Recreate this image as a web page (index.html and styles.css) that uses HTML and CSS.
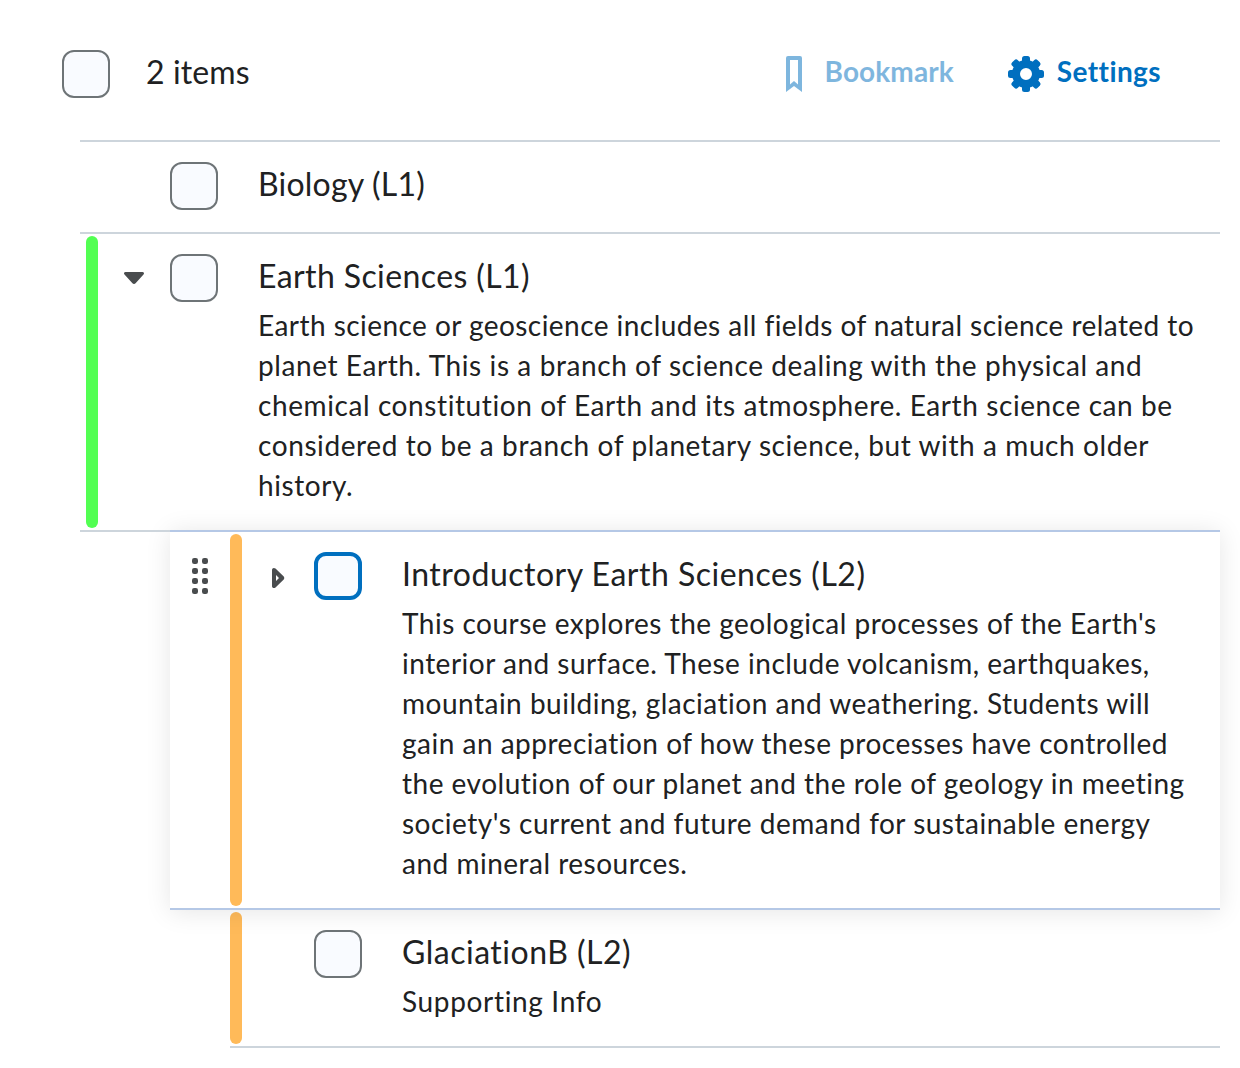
FILE: index.html
```html
<!DOCTYPE html>
<html lang="en">
<head>
<meta charset="utf-8">
<title>Course list</title>
<link rel="stylesheet" href="styles.css">
</head>
<body>
<header class="controls">
  <span class="checkbox"></span>
  <span class="count">2 items</span>
  <div class="actions">
    <div class="action disabled">
      <svg class="icon" viewBox="0 0 36 36"><path d="M10 2a2 2 0 0 1 2-2h12a2 2 0 0 1 2 2v34l-8-6-8 6zM14 4v24.500l4-3.500 4 3.500V4z" fill-rule="evenodd"/></svg>
      <span>Bookmark</span>
    </div>
    <div class="action settings">
      <svg class="icon" viewBox="0 0 36 36">
        <circle cx="18" cy="18" r="10" fill="none" stroke="currentColor" stroke-width="8"/>
        <g id="teeth"><rect x="14" y="0" width="8" height="9" rx="2.500"/><rect x="14" y="27" width="8" height="9" rx="2.500"/><rect x="0" y="14" width="9" height="8" rx="2.500"/><rect x="27" y="14" width="9" height="8" rx="2.500"/></g>
        <use href="#teeth" transform="rotate(45 18 18)"/>
      </svg>
      <span>Settings</span>
    </div>
  </div>
</header>
<main class="list">
  <section class="item">
    <div class="outer"><span class="bar"></span><span class="toggle"></span><span class="checkbox"></span></div>
    <div class="content"><h2 class="biology">Biology (L1)</h2></div>
  </section>
  <section class="item">
    <div class="outer"><span class="bar green"></span><span class="toggle"><svg width="36" height="36" viewBox="0 0 36 36"><path d="M9.500 12h17c1.500 0 2 1.500 1 2.600l-7.700 8.400c-1 1.300-2.600 1.300-3.600 0l-7.700-8.400C7.500 13.500 8 12 9.500 12z"/></svg></span><span class="checkbox"></span></div>
    <div class="content"><h2>Earth Sciences (L1)</h2>
    <p class="earth"><span class="snug">Earth science or geoscience includes all fields of natural science related to</span> planet Earth. This is a branch of science dealing with the physical and chemical constitution of Earth and its atmosphere. Earth science can be considered to be a branch of planetary science, but with a much older history.</p></div>
  </section>
  <section class="item nested hovered">
    <div class="handle"><svg width="16" height="36" viewBox="0 0 16 36"><g id="dots"><rect width="6" height="6" rx="2.200"/><rect y="10" width="6" height="6" rx="2.200"/><rect y="20" width="6" height="6" rx="2.200"/><rect y="30" width="6" height="6" rx="2.200"/></g><use href="#dots" x="10"/></svg></div>
    <div class="outer"><span class="bar orange"></span><span class="toggle collapsed"><svg width="36" height="36" viewBox="0 0 36 36"><path fill-rule="evenodd" d="M12 10c0-2 2-2.800 3.500-1.400l8 7.600c1 1 1 2.600 0 3.600l-8 7.600c-1.500 1.400-3.500.6-3.500-1.400zM16 15v6l3-3z"/></svg></span><span class="checkbox focus"></span></div>
    <div class="content"><h2 class="intro">Introductory Earth Sciences (L2)</h2>
    <p class="course">This course explores the geological processes of the Earth's interior and surface. These include volcanism, earthquakes, mountain building, glaciation and weathering. Students will gain an appreciation of how these processes have controlled the evolution of our planet and the role of geology in meeting society's current and future demand for sustainable energy and mineral resources.</p></div>
  </section>
  <section class="item nested last">
    <div class="outer"><span class="bar orange"></span><span class="toggle"></span><span class="checkbox"></span></div>
    <div class="content"><h2 class="intro">GlaciationB (L2)</h2><p class="supporting">Supporting Info</p></div>
  </section>
</main>
</body>
</html>
```
FILE: styles.css
```css
* { box-sizing: border-box; }
body {
  margin: 0;
  background: #fff;
  color: #202122;
  font-family: Lato, sans-serif;
  letter-spacing: 0.4px;
}
.controls {
  display: flex;
  align-items: flex-start;
  height: 140px;
  padding: 50px 79px 0 62px;
}
.checkbox {
  flex: none;
  width: 48px;
  height: 48px;
  border: 2px solid #6e7477;
  border-radius: 12px;
  background: #f9fbff;
}
.checkbox.focus { border: 4px solid #006fbf; }
.count {
  margin-left: 36px;
  font-size: 32px;
  line-height: 44px;
  letter-spacing: 0.1px;
}
.actions {
  display: flex;
  gap: 54px;
  margin-left: auto;
}
.action {
  display: flex;
  align-items: center;
  gap: 13px;
  height: 48px;
  color: #006fbf;
  font-size: 28px;
  font-weight: 700;
  line-height: 40px;
}
.action span { margin-top: -6px; }
.action.disabled {
  opacity: 0.5;
  letter-spacing: 0.1px;
}
.icon {
  width: 36px;
  height: 36px;
  fill: currentColor;
}
.list { margin: 0 20px 0 80px; }
.item {
  display: flex;
  border-top: 2px solid #cdd5dc;
}
.outer {
  display: flex;
  flex: none;
  padding-left: 6px;
}
.outer .checkbox { margin: 20px 40px 0 18px; }
.bar {
  width: 12px;
  margin: 2px 0;
  border-radius: 6px;
}
.green { background: #52ff52; }
.orange { background: #ffba59; }
.toggle {
  width: 36px;
  height: 36px;
  margin: 26px 0 0 18px;
  fill: #494c4e;
}
.toggle.collapsed { margin-top: 28px; }
.toggle svg { display: block; }
.content {
  flex: 1;
  min-width: 0;
  padding: 19px 20px 25px 0;
}
h2 {
  margin: 0 0 4px;
  padding-bottom: 2px;
  font-size: 32px;
  font-weight: 400;
  line-height: 46px;
}
.biology { letter-spacing: 0.22px; }
.intro { letter-spacing: 0.5px; }
.item:first-child .content { padding-bottom: 19px; }
p {
  margin: 0;
  font-size: 28px;
  line-height: 40px;
}
.earth { letter-spacing: 0.59px; }
.snug { letter-spacing: 0.45px; }
.course { letter-spacing: 0.5px; }
.supporting { letter-spacing: 0.66px; }
.nested .outer { padding-left: 0; }
.hovered {
  position: relative;
  margin-left: 90px;
  border-top-color: #b5c8e6;
  border-bottom: 2px solid #b5c8e6;
  background: #fff;
  box-shadow: 0 2px 24px rgba(0, 0, 0, 0.1);
}
/* The divider of the list continues to the left of the raised row. */
.hovered::before {
  content: "";
  position: absolute;
  top: -2px;
  left: -90px;
  width: 90px;
  height: 2px;
  background: #cdd5dc;
}
.handle {
  flex: none;
  width: 60px;
  padding: 26px 0 0 22px;
  fill: #494c4e;
}
.last {
  margin-left: 150px;
  border-top: 0;
  border-bottom: 2px solid #cdd5dc;
}
```
